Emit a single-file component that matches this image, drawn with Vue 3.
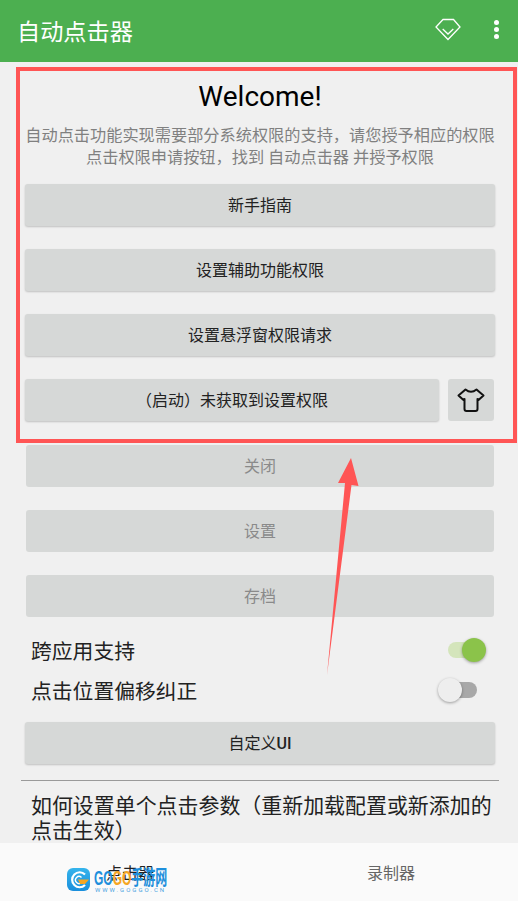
<script setup>
const topButtons = ["新手指南", "设置辅助功能权限", "设置悬浮窗权限请求"];
const lowerButtons = ["关闭", "设置", "存档"];
</script>

<template>
  <div class="page">
    <header class="toolbar">
      <span class="title">自动点击器</span>
      <svg class="gem" width="26" height="24" viewBox="0 0 26 24" fill="none" stroke="#fff" stroke-width="1.3">
        <path d="M8 1.5H18.5L25 9L13 21.5L1 9Z" />
        <path d="M7.7 11L13 16L18.3 11" />
      </svg>
      <div class="more"><i></i><i></i><i></i></div>
    </header>

    <main class="content">
      <section class="welcome">
        <h1>Welcome!</h1>
        <p class="hint">
          自动点击功能实现需要部分系统权限的支持，请您授予相应的权限<br />点击权限申请按钮，找到 自动点击器 并授予权限
        </p>
        <div class="stack">
          <button v-for="b in topButtons" :key="b" class="btn raised">{{ b }}</button>
          <div class="start-row">
            <button class="btn raised grow">（启动）未获取到设置权限</button>
            <button class="btn skin" aria-label="皮肤">
              <svg width="28" height="24" viewBox="0 0 28 24" fill="none" stroke="#111" stroke-width="2" stroke-linejoin="round">
                <path d="M8.5 1.5Q14 6 19.5 1.5L26.5 7.5L21.5 12L20.5 11V21Q20.5 23 18.5 23H9.5Q7.5 23 7.5 21V11L6.5 12L1.5 7.5Z" />
              </svg>
            </button>
          </div>
        </div>
      </section>

      <div class="lower">
        <button v-for="b in lowerButtons" :key="b" class="btn disabled">{{ b }}</button>
      </div>

      <div class="switch-row first">
        <span>跨应用支持</span>
        <span class="switch on"><i></i></span>
      </div>
      <div class="switch-row second">
        <span>点击位置偏移纠正</span>
        <span class="switch off"><i></i></span>
      </div>

      <button class="btn raised custom">自定义<b>UI</b></button>

      <div class="divider"></div>
      <p class="param">如何设置单个点击参数（重新加载配置或新添加的点击生效）</p>
    </main>

    <nav class="tabs">
      <span>点击器</span>
      <span class="muted">录制器</span>
      <div class="watermark">
        <svg width="24" height="24" viewBox="0 0 24 24">
          <defs>
            <linearGradient id="logo" x1="0" y1="0" x2="0" y2="1">
              <stop offset="0" stop-color="#35b4ec" />
              <stop offset="1" stop-color="#1a8fdc" />
            </linearGradient>
          </defs>
          <rect width="23" height="23" rx="6" fill="url(#logo)" />
          <path d="M18 6.5A7.5 7.5 0 1 0 18 17" fill="none" stroke="#fff" stroke-width="2.2" />
          <path d="M14.5 9.5A3.5 3.5 0 1 0 14.5 14.5" fill="none" stroke="#fff" stroke-width="1.4" />
          <path d="M11 11.5H22L18 16H13Z" fill="#f5a623" />
        </svg>
        <div class="mark-text">
          <div class="mark-name"><span class="blue">GO</span><span class="orange">GO</span><span class="blue">手游网</span></div>
          <div class="mark-url">WWW.GOGGO.CN</div>
        </div>
      </div>
    </nav>

    <!-- annotation arrow drawn over the page -->
    <svg class="arrow" width="50" height="230" viewBox="0 0 50 230">
      <path d="M31 8L38.5 36L31.5 35L7 225L25 33L18 33Z" fill="#ff5555" />
    </svg>
  </div>
</template>

<style scoped>
.page {
  position: relative;
  width: 518px;
  height: 901px;
  overflow: hidden;
  background: #f0f0f0;
  font-family: "Roboto", "Noto Sans CJK SC", sans-serif;
  display: flex;
  flex-direction: column;
}
.toolbar {
  box-sizing: border-box;
  height: 62px;
  flex: none;
  background: #4caf50;
  display: flex;
  align-items: center;
  padding: 0 19px 3px 17px;
  color: #fff;
}
.title {
  font-size: 23.2px;
  flex: 1;
}
.gem {
  margin-right: 33px;
}
.more {
  display: flex;
  flex-direction: column;
  gap: 2px;
}
.more i {
  width: 5px;
  height: 5px;
  border-radius: 50%;
  background: #fff;
}
.content {
  flex: 1;
  min-height: 0;
  overflow: hidden;
}
.welcome {
  box-sizing: border-box;
  width: 501px;
  height: 376px;
  margin: 5px 0 0 16px;
  border: 4px solid #ff5555;
  padding: 0 18px 0 5px;
  text-align: center;
}
h1 {
  margin: 8px 0 0;
  font-size: 28px;
  font-weight: 400;
  line-height: 36px;
  color: #000;
}
.hint {
  margin: 10px 0 0;
  font-size: 16.2px;
  line-height: 22px;
  color: #808080;
  white-space: nowrap;
}
.stack {
  display: flex;
  flex-direction: column;
  gap: 23px;
  margin-top: 15px;
}
.btn {
  display: block;
  border: 0;
  border-radius: 3px;
  background: #d6d8d7;
  font-family: inherit;
  font-size: 16px;
  color: #222;
  padding: 0 0 2px;
}
.raised {
  box-shadow: 0 1px 2px rgba(0, 0, 0, 0.2);
}
.stack > .btn {
  width: 470px;
  height: 42px;
}
.start-row {
  display: flex;
  align-items: center;
}
.grow {
  width: 414px;
  height: 42px;
}
.skin {
  width: 46px;
  height: 42px;
  margin-left: 9px;
  padding: 0;
  display: flex;
  align-items: center;
  justify-content: center;
}
.lower {
  margin: 2px 0 0 26px;
  display: flex;
  flex-direction: column;
  gap: 23px;
}
.disabled {
  width: 468px;
  height: 42px;
  color: #8a8a8a;
}
.switch-row {
  display: flex;
  align-items: center;
  justify-content: space-between;
  height: 28px;
  margin-left: 31px;
  font-size: 20.8px;
  color: #222;
}
.first {
  margin-top: 19px;
}
.second {
  margin-top: 12px;
}
.switch {
  position: relative;
  width: 29px;
  height: 16px;
  margin-right: 41px;
  border-radius: 8px;
}
.switch i {
  position: absolute;
  top: -4px;
  width: 24px;
  height: 24px;
  border-radius: 50%;
  box-shadow: 0 1px 3px rgba(0, 0, 0, 0.35);
}
.on {
  background: #d4e5bb;
}
.on i {
  right: -9px;
  background: #8bc34a;
}
.off {
  background: #a8a8a8;
}
.off i {
  left: -10px;
  background: #eeeeee;
}
.custom {
  width: 470px;
  height: 42px;
  margin: 18px 0 0 25px;
}
.custom b {
  font-weight: 500;
}
.divider {
  height: 1px;
  margin: 16px 19px 0 21px;
  background: #9a9a9a;
}
.param {
  width: 465px;
  margin: 13px 0 0 31px;
  font-size: 20.95px;
  line-height: 25px;
  color: #222;
}
.tabs {
  position: relative;
  height: 58px;
  flex: none;
  background: #fafafa;
  display: grid;
  grid-template-columns: 260px 1fr;
  align-items: center;
  text-align: center;
  font-size: 16px;
  color: #222;
}
.tabs .muted {
  padding-left: 4px;
  color: #666;
}
.watermark {
  position: absolute;
  left: 67px;
  top: 25px;
  display: flex;
  gap: 3px;
}
.mark-text {
  padding-top: 2px;
}
.mark-name {
  font-size: 20px;
  font-weight: 700;
  line-height: 17px;
  white-space: nowrap;
  font-family: "Liberation Sans", "Noto Sans CJK SC", sans-serif;
  transform: scaleX(0.6);
  transform-origin: left;
  width: 73px;
}
.blue {
  color: #1e8fdc;
}
.orange {
  color: #f5a623;
}
.mark-url {
  font-size: 6px;
  line-height: 6px;
  letter-spacing: 2px;
  color: #4aa3df;
  white-space: nowrap;
}
.arrow {
  position: absolute;
  left: 320px;
  top: 450px;
}
</style>
